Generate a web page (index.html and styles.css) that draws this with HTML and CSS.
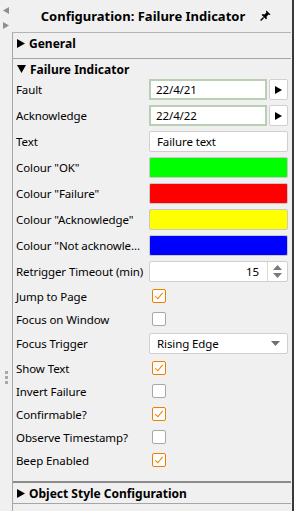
FILE: index.html
```html
<!DOCTYPE html>
<html lang="en">
<head>
    <meta charset="UTF-8">
    <meta name="viewport" content="width=device-width, initial-scale=1.0">
    <title>Configuration: Failure Indicator</title>
    <link rel="stylesheet" href="styles.css">
</head>
<body>
    <div class="window">
        <div class="rail">
            <svg class="rail-arrow" width="6" height="7" viewBox="0 0 6 7"><path d="M6 0V7L0 3.5Z" fill="#8e8e8e"/></svg>
            <svg class="rail-arrow" width="6" height="7" viewBox="0 0 6 7"><path d="M0 0V7L6 3.5Z" fill="#8e8e8e"/></svg>
            <div class="grip">
                <span></span><span></span><span></span>
            </div>
        </div>

        <div class="main">
            <div class="title">
                <span>Configuration: Failure Indicator</span>
                <svg class="pin" width="11" height="11" viewBox="0 0 11 11">
                    <path d="M6.5 0.5L10.5 4.5L9.6 5.1L8.6 4.6L6.6 6.6L6.9 8.7L6 9.3L1.7 5L2.3 4.1L4.4 4.4L6.4 2.4L5.9 1.4Z" fill="#000"/>
                    <path d="M3.6 7.4L0.6 10.4" stroke="#000" stroke-width="1.4"/>
                </svg>
            </div>

            <div class="sections">
                <div class="section">
                    <div class="section-head">
                        <svg width="8" height="9" viewBox="0 0 8 9"><path d="M0 0V9L8 4.5Z" fill="#000"/></svg>
                        <span>General</span>
                    </div>
                </div>

                <div class="section open">
                    <div class="section-head">
                        <svg width="9" height="8" viewBox="0 0 9 8"><path d="M0 0H9L4.5 8Z" fill="#000"/></svg>
                        <span>Failure Indicator</span>
                    </div>

                    <div class="fields">
                        <div class="row">
                            <div class="label">Fault</div>
                            <div class="value">
                                <div class="date">22/4/21</div>
                                <div class="step"><svg width="7" height="8" viewBox="0 0 7 8"><path d="M0 0V8L7 4Z" fill="#000"/></svg></div>
                            </div>
                        </div>
                        <div class="row">
                            <div class="label">Acknowledge</div>
                            <div class="value">
                                <div class="date">22/4/22</div>
                                <div class="step"><svg width="7" height="8" viewBox="0 0 7 8"><path d="M0 0V8L7 4Z" fill="#000"/></svg></div>
                            </div>
                        </div>
                        <div class="row">
                            <div class="label">Text</div>
                            <div class="value"><div class="text-box">Failure text</div></div>
                        </div>
                        <div class="row">
                            <div class="label">Colour "OK"</div>
                            <div class="value"><div class="swatch green"></div></div>
                        </div>
                        <div class="row">
                            <div class="label">Colour "Failure"</div>
                            <div class="value"><div class="swatch red"></div></div>
                        </div>
                        <div class="row">
                            <div class="label">Colour "Acknowledge"</div>
                            <div class="value"><div class="swatch yellow"></div></div>
                        </div>
                        <div class="row">
                            <div class="label">Colour "Not acknowle...</div>
                            <div class="value"><div class="swatch blue"></div></div>
                        </div>
                        <div class="row">
                            <div class="label">Retrigger Timeout (min)</div>
                            <div class="value">
                                <div class="spin">
                                    <span class="spin-num">15</span>
                                    <span class="spin-btns">
                                        <svg width="9" height="13" viewBox="0 0 9 13"><path d="M0 5L4.5 0L9 5Z M0 8H9L4.5 13Z" fill="#7a7a7a"/></svg>
                                    </span>
                                </div>
                            </div>
                        </div>
                        <div class="row check-row">
                            <div class="label">Jump to Page</div>
                            <div class="value"><span class="check on"></span></div>
                        </div>
                        <div class="row check-row">
                            <div class="label">Focus on Window</div>
                            <div class="value"><span class="check"></span></div>
                        </div>
                        <div class="row">
                            <div class="label">Focus Trigger</div>
                            <div class="value">
                                <div class="combo">
                                    <span>Rising Edge</span>
                                    <svg width="9" height="5" viewBox="0 0 9 5"><path d="M0 0H9L4.5 5Z" fill="#6f6f6f"/></svg>
                                </div>
                            </div>
                        </div>
                        <div class="row check-row">
                            <div class="label">Show Text</div>
                            <div class="value"><span class="check on"></span></div>
                        </div>
                        <div class="row check-row">
                            <div class="label">Invert Failure</div>
                            <div class="value"><span class="check"></span></div>
                        </div>
                        <div class="row check-row">
                            <div class="label">Confirmable?</div>
                            <div class="value"><span class="check on"></span></div>
                        </div>
                        <div class="row check-row">
                            <div class="label">Observe Timestamp?</div>
                            <div class="value"><span class="check"></span></div>
                        </div>
                        <div class="row check-row">
                            <div class="label">Beep Enabled</div>
                            <div class="value"><span class="check on"></span></div>
                        </div>
                    </div>
                </div>

                <div class="section">
                    <div class="section-head">
                        <svg width="8" height="9" viewBox="0 0 8 9"><path d="M0 0V9L8 4.5Z" fill="#000"/></svg>
                        <span>Object Style Configuration</span>
                    </div>
                </div>
            </div>
        </div>
    </div>
</body>
</html>
```

FILE: styles.css
```css
body {
    margin: 0;
    width: 294px;
    height: 511px;
    overflow: hidden;
    background-color: #f0f0f0;
    font-family: 'Noto Sans', sans-serif;
    font-size: 11.5px;
    letter-spacing: -0.1px;
    color: #000;
}

.window {
    display: flex;
    height: 511px;
    border-right: 2px solid #3a3a3a;
    box-sizing: border-box;
}

.rail {
    width: 12px;
    flex: none;
    display: flex;
    flex-direction: column;
    align-items: center;
    padding-top: 7px;
    gap: 8px;
}

.grip {
    display: flex;
    flex-direction: column;
    gap: 2px;
    margin-top: 334px;
}

.grip span {
    width: 3px;
    height: 3px;
    background-color: #a8a8a8;
}

.main {
    flex: 1;
    display: flex;
    flex-direction: column;
    min-width: 0;
}

.title {
    height: 32px;
    display: flex;
    align-items: center;
    justify-content: center;
    gap: 15px;
    font-size: 13px;
    font-weight: bold;
    letter-spacing: 0;
    padding-left: 8px;
    padding-bottom: 1px;
    box-sizing: border-box;
}

.sections {
    flex: 1;
    border-left: 1px solid #a6a6a6;
    border-top: 1px solid #b4b4b4;
    margin-right: 1px;
}

.section {
    border-bottom: 1px solid #a6a6a6;
}

.section:first-child {
    padding-bottom: 5px;
}

.section.open {
    border-bottom: 2px solid #8c8c8c;
}

.section-head {
    height: 20px;
    display: flex;
    align-items: center;
    gap: 4px;
    padding-left: 4px;
    font-weight: bold;
    font-size: 12px;
    letter-spacing: 0;
}

.fields {
    display: flex;
    flex-direction: column;
    gap: 5px;
    padding-bottom: 12px;
}

.row {
    display: flex;
    align-items: center;
    height: 21px;
}

.check-row {
    height: 18px;
}

.label {
    width: 133px;
    padding-left: 3px;
    flex: none;
    white-space: nowrap;
    overflow: hidden;
}

.value {
    width: 139px;
    display: flex;
    align-items: center;
    gap: 2px;
}

.date {
    flex: 1;
    height: 21px;
    box-sizing: border-box;
    border: 2px solid #b8cfb4;
    background-color: #fff;
    padding-left: 5px;
    line-height: 17px;
}

.step {
    width: 19px;
    height: 21px;
    box-sizing: border-box;
    border: 1px solid #d0d0d0;
    border-radius: 2px;
    background-color: #fff;
    display: flex;
    align-items: center;
    justify-content: center;
}

.text-box {
    flex: 1;
    height: 21px;
    box-sizing: border-box;
    border: 1px solid #cfcfcf;
    border-radius: 2px;
    background-color: #fff;
    padding-left: 7px;
    line-height: 19px;
}

.swatch {
    flex: 1;
    height: 21px;
    box-sizing: border-box;
    border: 1px solid #c8c8c8;
    border-radius: 2px;
}

.green { background-color: #00ff00; }
.red { background-color: #ff0000; }
.yellow { background-color: #ffff00; }
.blue { background-color: #0000ff; }

.spin {
    flex: 1;
    height: 21px;
    box-sizing: border-box;
    border: 1px solid #cfcfcf;
    border-radius: 2px;
    background-color: #fff;
    display: flex;
}

.spin-num {
    flex: 1;
    text-align: right;
    padding-right: 8px;
    line-height: 19px;
    border-right: 1px solid #d8d8d8;
}

.spin-btns {
    width: 19px;
    display: flex;
    align-items: center;
    justify-content: center;
}

.check {
    width: 14px;
    height: 14px;
    box-sizing: border-box;
    margin-left: 3px;
    border: 1px solid #a8a8a8;
    border-radius: 2px;
    background-color: #fff;
    position: relative;
}

.check.on {
    border-color: #f07d00;
}

.check.on::after {
    content: "";
    position: absolute;
    left: 3.5px;
    top: 1px;
    width: 3px;
    height: 7px;
    border-right: 1.5px solid #f07d00;
    border-bottom: 1.5px solid #f07d00;
    transform: rotate(40deg);
}

.combo {
    flex: 1;
    height: 21px;
    box-sizing: border-box;
    border: 1px solid #cfcfcf;
    border-radius: 2px;
    background-color: #fff;
    display: flex;
    align-items: center;
    justify-content: space-between;
    padding: 0 7px 0 7px;
}
```
